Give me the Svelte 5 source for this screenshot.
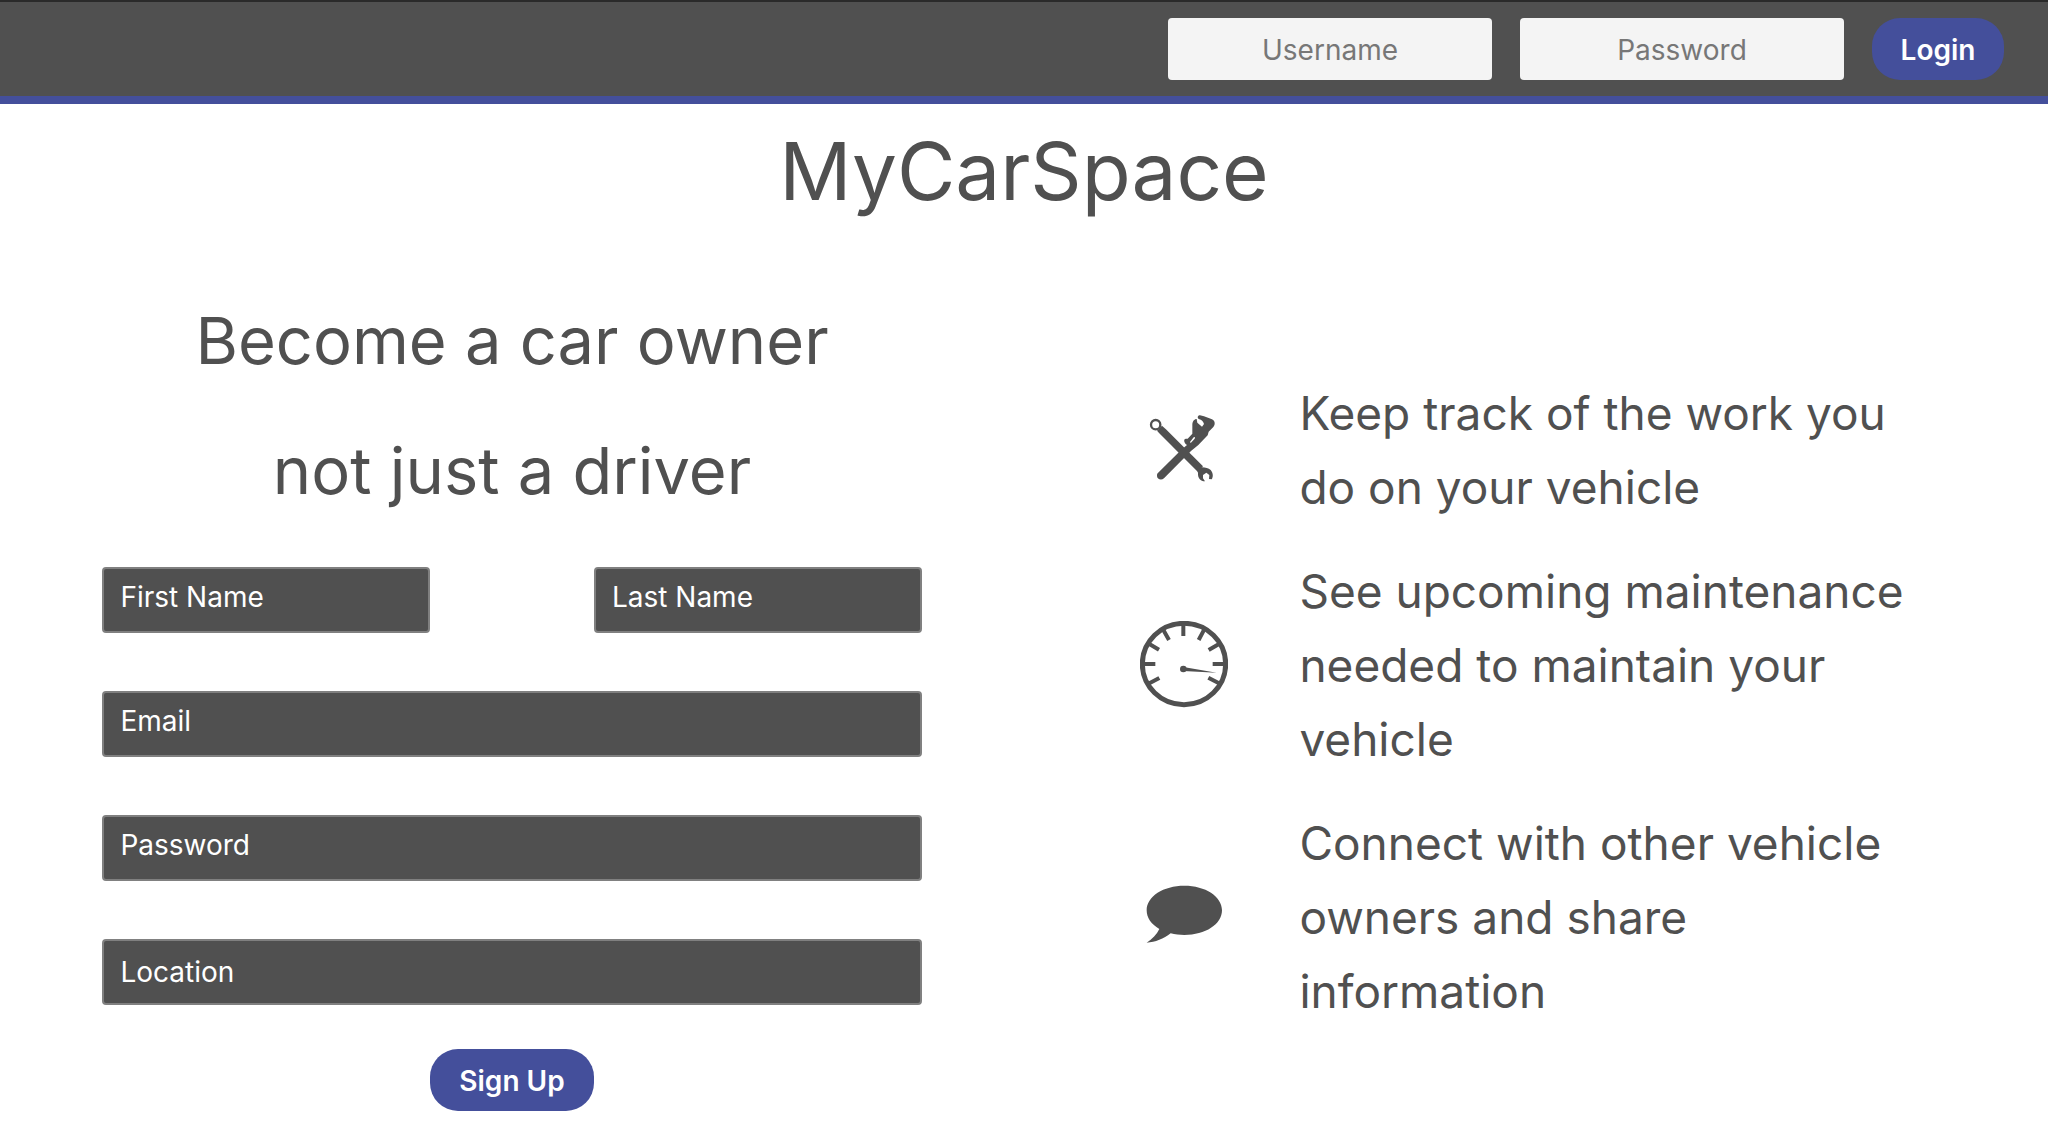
<script>
  const features = [
    { icon: 'tools', text: 'Keep track of the work you do on your vehicle' },
    { icon: 'gauge', text: 'See upcoming maintenance needed to maintain your vehicle' },
    { icon: 'chat', text: 'Connect with other vehicle owners and share information' }
  ];
</script>

<header class="topbar">
  <form class="login" onsubmit={(e) => e.preventDefault()}>
    <input class="login-input" type="text" placeholder="Username" aria-label="Username" />
    <input class="login-input" type="password" placeholder="Password" aria-label="Password" />
    <button class="button" type="submit">Login</button>
  </form>
</header>

<h1>MyCarSpace</h1>

<main>
  <section class="signup">
    <h2>Become a car owner<br />not just a driver</h2>
    <form class="signup-form" onsubmit={(e) => e.preventDefault()}>
      <div class="names">
        <input class="field" type="text" placeholder="First Name" aria-label="First Name" />
        <input class="field" type="text" placeholder="Last Name" aria-label="Last Name" />
      </div>
      <input class="field" type="email" placeholder="Email" aria-label="Email" />
      <input class="field" type="password" placeholder="Password" aria-label="Choose a password" />
      <input class="field location" type="text" placeholder="Location" aria-label="Location" />
      <button class="button submit" type="submit">Sign Up</button>
    </form>
  </section>

  <ul class="features">
    {#each features as feature}
      <li>
        {#if feature.icon === 'tools'}
          <svg class="icon" viewBox="30 15 264 264" aria-hidden="true">
            <circle cx="77" cy="71" r="14" fill="none" stroke="currentColor" stroke-width="7" />
            <path d="M81 89 L96 74 L107 84 L219 196 L203 212 L90 99 Z" />
            <path d="M200 202 C212 196 232 198 242 207 C250 216 250 228 245 235 L237 234 L238 222 L229 215 L219 222 L219 232 L225 241 C211 241 203 231 204 216 Z" />
            <path d="M83 217 L151 149 L171 132 C165 128 161 121 163 116 C165 112 169 113 173 113 L187 98 L187 72 C187 61 193 54 200 54 L202 65 L216 77 L222 69 C220 59 213 56 205 53 C201 49 204 43 210 43 L222 46 L246 55 C256 60 256 71 250 78 L236 92 L233 103 L205 132 L183 150 L102 232 C94 239 81 235 81 225 C81 222 81 219 83 217 Z" />
            <path d="M180 123 L191 109 L195 108 L194 113 L182 126 Z" fill="#fff" />
          </svg>
        {:else if feature.icon === 'gauge'}
          <svg class="icon" viewBox="30 30 264 264" aria-hidden="true">
            <ellipse cx="162" cy="159" rx="125" ry="122" fill="none" stroke="currentColor" stroke-width="15" />
            <g stroke="currentColor" stroke-width="12">
              <path d="M160 38V75M98 53L117 87M224 53L206 87M58 99L87 116M267 99L236 117M38 159H76M286 159H248M58 217L88 201M267 217L235 200" />
            </g>
            <circle cx="160" cy="174" r="10" />
            <path d="M160 168 L260 185 L160 180 Z" />
          </svg>
        {:else}
          <svg class="icon" viewBox="30 6 264 264" aria-hidden="true">
            <path d="M163 44 C226 44 276 76 276 118 C276 160 226 192 163 192 C149 192 135 190 122 187 C101 203 76 214 50 215 C67 204 80 191 88 174 C64 160 50 141 50 118 C50 76 100 44 163 44 Z" />
          </svg>
        {/if}
        <p>{feature.text}</p>
      </li>
    {/each}
  </ul>
</main>

<style>
  :global(body) {
    margin: 0;
    background: #fff;
    color: #505050;
    font-family: Inter, 'Liberation Sans', sans-serif;
  }

  .topbar {
    box-sizing: border-box;
    padding: 16px 44px;
    background: #505050;
    border-top: 2px solid #2a2a2a;
    border-bottom: 8px solid #444f9b;
  }

  .login {
    display: flex;
    justify-content: flex-end;
    gap: 28px;
  }

  input,
  button {
    box-sizing: border-box;
    margin: 0;
    font-family: inherit;
    font-size: 28px;
  }

  .login-input {
    width: 324px;
    height: 62px;
    padding: 2px 16px 0;
    border: 0;
    border-radius: 4px;
    background: #f4f4f4;
    color: #505050;
    text-align: center;
  }

  .login-input::placeholder {
    color: #777;
    opacity: 1;
  }

  .button {
    min-width: 132px;
    height: 62px;
    padding: 2px 28px 0;
    border: 0;
    border-radius: 28px;
    background: #444f9b;
    color: #fff;
    font-weight: 600;
    cursor: pointer;
  }

  h1,
  h2,
  p,
  ul {
    margin: 0;
    padding: 0;
    font-weight: 400;
  }

  h1 {
    font-size: 80px;
    line-height: 134px;
    text-align: center;
  }

  main {
    display: grid;
    grid-template-columns: 1fr 1fr;
    padding-top: 38px;
  }

  .signup {
    padding: 0 10%;
  }

  h2 {
    font-size: 65px;
    line-height: 130px;
    text-align: center;
    white-space: nowrap;
  }

  .signup-form {
    display: flex;
    flex-direction: column;
    gap: 58px;
    padding-top: 31px;
  }

  .names {
    display: grid;
    grid-template-columns: 1fr 1fr;
    gap: 20%;
  }

  .field {
    width: 100%;
    height: 66px;
    padding: 0 16px 6px;
    border: 2px solid #808080;
    border-radius: 4px;
    background: #505050;
    color: #fff;
  }

  .location {
    padding-bottom: 0;
  }

  .field::placeholder {
    color: #fff;
    opacity: 1;
  }

  .submit {
    align-self: center;
    min-width: 164px;
    margin-top: -14px;
  }

  .features {
    display: flex;
    flex-direction: column;
    gap: 30px;
    padding: 100px 10% 0;
    list-style: none;
  }

  .features li {
    display: flex;
    align-items: center;
    gap: 71px;
    padding-left: 14px;
  }

  .icon {
    flex: none;
    width: 88px;
    height: 88px;
    fill: currentColor;
  }

  .features p {
    font-size: 46px;
    line-height: 74px;
  }
</style>
